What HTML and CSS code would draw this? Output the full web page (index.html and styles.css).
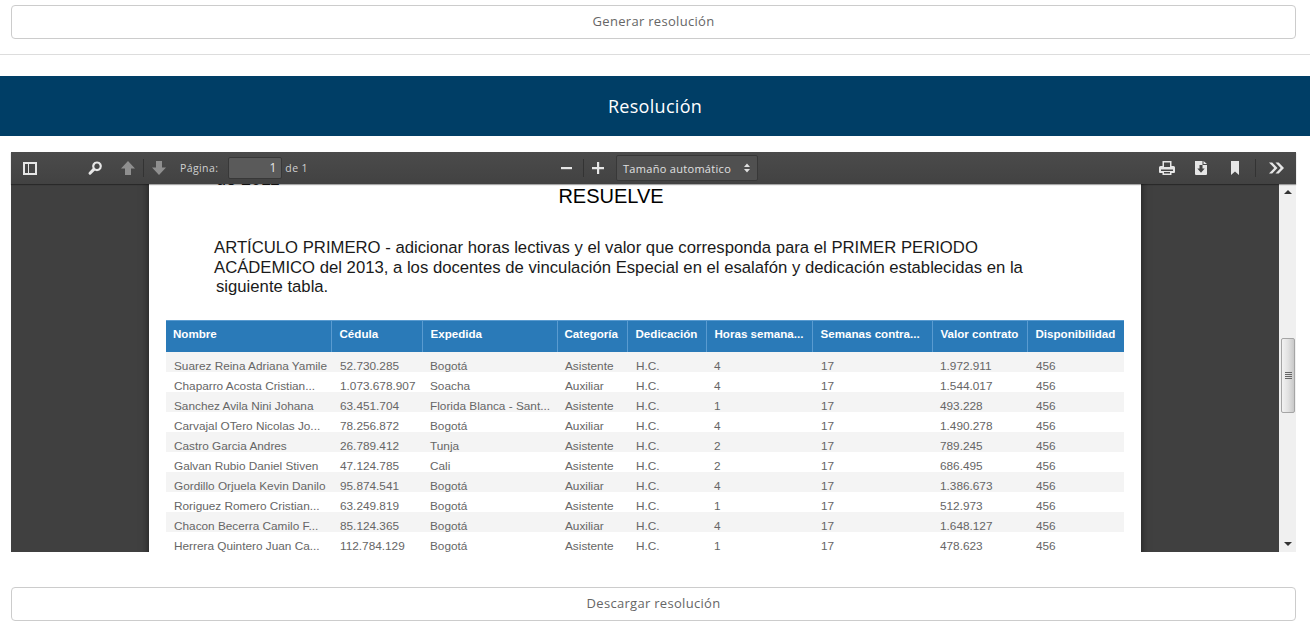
FILE: index.html
```html
<!DOCTYPE html>
<html>

<head>
    <meta charset="UTF-8">
    <title>Resolución</title>
    <link rel="stylesheet" href="styles.css">
</head>

<body>
    <div class="actionRow">
        <button class="actionButton">Generar resolución</button>
    </div>
    <hr class="divider">
    <h2 class="banner">Resolución</h2>

    <div class="viewer">
        <div class="viewerToolbar">
            <div class="toolbarLeft">
                <button class="toolButton sidebarToggle"><svg class="toolIcon"><use href="#icon-sidebar" /></svg></button>
                <button class="toolButton searchToggle"><svg class="toolIcon"><use href="#icon-search" /></svg></button>
                <button class="toolButton dimmed"><svg class="toolIcon"><use href="#icon-up" /></svg></button>
                <span class="toolSeparator"></span>
                <button class="toolButton dimmed"><svg class="toolIcon"><use href="#icon-down" /></svg></button>
                <span class="toolLabel pageLabel">Página:</span>
                <span class="pageInput">1</span>
                <span class="toolLabel">de 1</span>
            </div>
            <div class="toolbarCenter">
                <button class="toolButton"><svg class="toolIcon"><use href="#icon-minus" /></svg></button>
                <span class="toolSeparator zoomSeparator"></span>
                <button class="toolButton"><svg class="toolIcon"><use href="#icon-plus" /></svg></button>
                <span class="scaleSelect">Tamaño automático<svg class="selectArrows"><use href="#icon-updown" /></svg></span>
            </div>
            <div class="toolbarRight">
                <button class="toolButton wide"><svg class="toolIcon"><use href="#icon-print" /></svg></button>
                <button class="toolButton wide"><svg class="toolIcon"><use href="#icon-download" /></svg></button>
                <button class="toolButton wide"><svg class="toolIcon"><use href="#icon-bookmark" /></svg></button>
                <span class="toolSeparator moreSeparator"></span>
                <button class="toolButton"><svg class="toolIcon"><use href="#icon-more" /></svg></button>
            </div>
        </div>

        <div class="viewerBody">
            <div class="pageArea">
                <div class="sheet">
                    <p class="clippedLine">de 2011</p>
                    <p class="resolveTitle">RESUELVE</p>
                    <p class="article">ARTÍCULO PRIMERO - adicionar horas lectivas y el valor que corresponda para el PRIMER PERIODO<br>ACÁDEMICO del 2013, a los docentes de vinculación Especial en el esalafón y dedicación establecidas en la<br><span class="lastLine">siguiente tabla.</span></p>
                    <table class="teachers">
                        <colgroup>
                            <col class="colName"><col class="colId"><col class="colCity"><col class="colCat"><col class="colDed"><col class="colHours"><col class="colWeeks"><col class="colValue"><col class="colAvail">
                        </colgroup>
                        <thead>
                            <tr><th>Nombre</th><th>Cédula</th><th>Expedida</th><th>Categoría</th><th>Dedicación</th><th>Horas semana...</th><th>Semanas contra...</th><th>Valor contrato</th><th>Disponibilidad</th></tr>
                        </thead>
                        <tbody>
                            <tr><td>Suarez Reina Adriana Yamile</td><td>52.730.285</td><td>Bogotá</td><td>Asistente</td><td>H.C.</td><td>4</td><td>17</td><td>1.972.911</td><td>456</td></tr>
                            <tr><td>Chaparro Acosta Cristian...</td><td>1.073.678.907</td><td>Soacha</td><td>Auxiliar</td><td>H.C.</td><td>4</td><td>17</td><td>1.544.017</td><td>456</td></tr>
                            <tr><td>Sanchez Avila Nini Johana</td><td>63.451.704</td><td>Florida Blanca - Sant...</td><td>Asistente</td><td>H.C.</td><td>1</td><td>17</td><td>493.228</td><td>456</td></tr>
                            <tr><td>Carvajal OTero Nicolas Jo...</td><td>78.256.872</td><td>Bogotá</td><td>Auxiliar</td><td>H.C.</td><td>4</td><td>17</td><td>1.490.278</td><td>456</td></tr>
                            <tr><td>Castro Garcia Andres</td><td>26.789.412</td><td>Tunja</td><td>Asistente</td><td>H.C.</td><td>2</td><td>17</td><td>789.245</td><td>456</td></tr>
                            <tr><td>Galvan Rubio Daniel Stiven</td><td>47.124.785</td><td>Cali</td><td>Asistente</td><td>H.C.</td><td>2</td><td>17</td><td>686.495</td><td>456</td></tr>
                            <tr><td>Gordillo Orjuela Kevin Danilo</td><td>95.874.541</td><td>Bogotá</td><td>Auxiliar</td><td>H.C.</td><td>4</td><td>17</td><td>1.386.673</td><td>456</td></tr>
                            <tr><td>Roriguez Romero Cristian...</td><td>63.249.819</td><td>Bogotá</td><td>Asistente</td><td>H.C.</td><td>1</td><td>17</td><td>512.973</td><td>456</td></tr>
                            <tr><td>Chacon Becerra Camilo F...</td><td>85.124.365</td><td>Bogotá</td><td>Auxiliar</td><td>H.C.</td><td>4</td><td>17</td><td>1.648.127</td><td>456</td></tr>
                            <tr><td>Herrera Quintero Juan Ca...</td><td>112.784.129</td><td>Bogotá</td><td>Asistente</td><td>H.C.</td><td>1</td><td>17</td><td>478.623</td><td>456</td></tr>
                        </tbody>
                    </table>
                </div>
            </div>
            <div class="scrollTrack">
                <span class="scrollArrow arrowUp"></span>
                <div class="scrollSpace">
                    <div class="scrollThumb"><span class="thumbGrip"></span></div>
                </div>
                <span class="scrollArrow arrowDown"></span>
            </div>
        </div>
    </div>

    <div class="actionRow bottomRow">
        <button class="actionButton">Descargar resolución</button>
    </div>

    <svg xmlns="http://www.w3.org/2000/svg" class="iconSheet">
        <symbol id="icon-sidebar" viewBox="0 0 16 16">
            <path fill="currentColor" fill-rule="evenodd" d="M1 2h14v13H1zM3 4v9h3V4zM7 4v9h6V4z" />
        </symbol>
        <symbol id="icon-search" viewBox="0 0 16 16">
            <path fill="none" stroke="currentColor" stroke-width="2.2" d="M10 2.500a3.800 3.800 0 1 1-.01 0z" />
            <path fill="none" stroke="currentColor" stroke-width="3" stroke-linecap="round" d="M6.800 9.400 3 13.200" />
        </symbol>
        <symbol id="icon-up" viewBox="0 0 16 16">
            <path fill="currentColor" d="M8 1 15 8.500H11V15H5V8.500H1z" />
        </symbol>
        <symbol id="icon-down" viewBox="0 0 16 16">
            <path fill="currentColor" d="M5 1h6v6.500h4L8 15 1 7.500h4z" />
        </symbol>
        <symbol id="icon-minus" viewBox="0 0 16 16">
            <path fill="currentColor" d="M2 7h11v2.200H2z" />
        </symbol>
        <symbol id="icon-plus" viewBox="0 0 16 16">
            <path fill="currentColor" d="M7 2h2.200v5H14v2.200H9.200V14H7V9.200H2V7h5z" />
        </symbol>
        <symbol id="icon-updown" viewBox="0 0 8 12">
            <path fill="currentColor" d="M4 1.500 7 5H1zM1 7h6l-3 3.500z" />
        </symbol>
        <symbol id="icon-print" viewBox="0 0 16 16">
            <path fill="currentColor" fill-rule="evenodd" d="M3.500 1h9v5H14.500A1.500 1.500 0 0 1 16 7.500V12a1 1 0 0 1-1 1h-2.500v2h-9v-2H1a1 1 0 0 1-1-1V7.500A1.500 1.500 0 0 1 1.500 6h2zM5 2.500V7h6V2.500zM2 9.500V11h12V9.500zM5 12v1.500h6V12z" />
        </symbol>
        <symbol id="icon-download" viewBox="0 0 16 16">
            <path fill="currentColor" fill-rule="evenodd" d="M2 1h7.500v4H14v9a1 1 0 0 1-1 1H3a1 1 0 0 1-1-1zM6.500 5v3.500H4.300L8 12.800l3.700-4.300H9.500V5zM10.500 1 14 4H10.500z" />
        </symbol>
        <symbol id="icon-bookmark" viewBox="0 0 16 16">
            <path fill="currentColor" d="M4 1h8v14L8 11.500 4 15z" />
        </symbol>
        <symbol id="icon-more" viewBox="0 0 16 16">
            <path fill="currentColor" d="M1 2.500h3.200L9.500 8l-5.300 5.500H1L6.200 8zM7.500 2.500h3.200L16 8l-5.300 5.500H7.500L12.700 8z" />
        </symbol>
    </svg>
</body>

</html>
```
FILE: styles.css
```css
html,
body {
    margin: 0;
    height: 100%;
    background: #fff;
    overflow: hidden;
    font-family: 'Open Sans', sans-serif;
}

.iconSheet {
    display: none;
}

.actionRow {
    padding: 5px 14px 0 11px;
}

.bottomRow {
    padding-top: 35px;
}

.actionButton {
    display: block;
    width: 100%;
    height: 34px;
    padding: 0 0 2px;
    border: 1px solid #ccc;
    border-radius: 4px;
    background: #fff;
    color: #666;
    font-family: 'Open Sans', sans-serif;
    font-size: 13px;
    letter-spacing: .3px;
}

.divider {
    height: 1px;
    margin: 15px 0 21px;
    border: 0;
    background: #ddd;
}

.banner {
    margin: 0;
    height: 60px;
    line-height: 60px;
    background: #003e66;
    color: #fff;
    font-size: 18px;
    font-weight: 400;
    text-align: center;
    letter-spacing: .3px;
}

.viewer {
    display: flex;
    flex-direction: column;
    height: 400px;
    margin: 16px 14px 0 11px;
    background: #404040;
}

.viewerToolbar {
    position: relative;
    z-index: 2;
    display: flex;
    flex: none;
    justify-content: space-between;
    align-items: center;
    height: 32px;
    background: linear-gradient(#4b4b4b, #424242);
    box-shadow: 0 1px 1px rgba(0, 0, 0, .35);
    color: #d9d9d9;
}

.toolbarLeft,
.toolbarCenter,
.toolbarRight {
    display: flex;
    align-items: center;
}

.toolbarCenter {
    position: absolute;
    left: 540px;
    top: 0;
    height: 32px;
}

.toolbarRight {
    margin-left: auto;
    padding-right: 4px;
}

.toolButton {
    display: flex;
    justify-content: center;
    align-items: center;
    width: 32px;
    height: 32px;
    padding: 0;
    border: none;
    background: transparent;
    color: #e6e6e6;
}

.toolButton.wide {
    width: 34px;
}

.toolButton.dimmed {
    width: 30px;
    color: #8f8f8f;
}

.sidebarToggle {
    margin-left: 3px;
}

.searchToggle {
    margin-left: 33px;
    margin-right: 2px;
}

.toolIcon {
    width: 16px;
    height: 16px;
}

.toolSeparator {
    width: 1px;
    height: 18px;
    background: #333;
}

.zoomSeparator {
    margin-right: -2px;
}

.moreSeparator {
    margin: 0 4px 0 3px;
}

.toolLabel {
    font-size: 10.500px;
    letter-spacing: .4px;
    color: #d0d0d0;
}

.pageLabel {
    margin-left: 6px;
}

.pageInput {
    box-sizing: border-box;
    width: 54px;
    height: 22px;
    margin: 0 3px 0 10px;
    padding-right: 5px;
    border: 1px solid #383838;
    border-radius: 2px;
    background: #5a5a5a;
    color: #e6e6e6;
    font-size: 12px;
    line-height: 20px;
    text-align: right;
}

.scaleSelect {
    display: flex;
    justify-content: space-between;
    align-items: center;
    box-sizing: border-box;
    width: 142px;
    height: 26px;
    margin-left: 2px;
    padding: 0 6px;
    border: 1px solid #383838;
    border-radius: 2px;
    background: #505050;
    color: #e0e0e0;
    font-size: 11px;
    letter-spacing: .3px;
}

.selectArrows {
    width: 8px;
    height: 12px;
}

.viewerBody {
    display: flex;
    flex: 1;
    min-height: 0;
}

.pageArea {
    flex: 1;
    min-width: 0;
    overflow: hidden;
    background: #404040;
}

.sheet {
    box-sizing: border-box;
    width: 992px;
    height: 420px;
    margin-left: 138px;
    padding: 0 17px;
    background: #fff;
    box-shadow: 0 0 8px rgba(0, 0, 0, .55);
    color: #1a1a1a;
    font-family: 'Liberation Sans', Arial, sans-serif;
}

.clippedLine {
    margin: -14px 0 0 50px;
    font-size: 18px;
    line-height: 18px;
}

.resolveTitle {
    margin: -3px 0 0;
    padding-right: 68px;
    color: #000;
    font-size: 20px;
    line-height: 22px;
    text-align: center;
}

.article {
    margin: 31px 0 0 48px;
    font-size: 16.700px;
    line-height: 19.500px;
}

.lastLine {
    margin-left: 2px;
}

.teachers {
    width: 958px;
    margin-top: 23px;
    border-collapse: collapse;
    table-layout: fixed;
    font-size: 11.800px;
}

.colName { width: 165px; }
.colId { width: 91px; }
.colCity { width: 135px; }
.colCat { width: 70px; }
.colDed { width: 79px; }
.colHours { width: 106px; }
.colWeeks { width: 120px; }
.colValue { width: 95px; }
.colAvail { width: 97px; }

.teachers th {
    height: 32px;
    padding: 0 0 6px 8px;
    box-sizing: border-box;
    border-top: 1px solid #5a9bd0;
    border-left: 1px solid #5a9bd0;
    background: #2a7ab8;
    color: #fff;
    font-size: 11.600px;
    font-weight: 700;
    text-align: left;
    white-space: nowrap;
}

.teachers th:first-child {
    padding-left: 7px;
    border-left: 0;
}

.teachers th:nth-child(4) {
    padding-left: 7px;
}

.teachers td {
    height: 20px;
    padding: 9px 0 0 8px;
    box-sizing: border-box;
    color: #666;
    line-height: 11px;
    white-space: nowrap;
}

.teachers td:nth-child(2),
.teachers td:nth-child(5),
.teachers td:nth-child(7),
.teachers td:nth-child(9) {
    padding-left: 9px;
}

.teachers tbody tr:nth-child(odd) {
    background: #f4f4f4;
}

.scrollTrack {
    display: flex;
    flex: none;
    flex-direction: column;
    align-items: center;
    width: 17px;
    background: #f0f0f0;
}

.scrollArrow {
    flex: none;
    width: 0;
    height: 0;
    margin: 6px 0;
    border-left: 4px solid transparent;
    border-right: 4px solid transparent;
}

.arrowUp {
    border-bottom: 4px solid #333;
}

.arrowDown {
    border-top: 4px solid #333;
}

.scrollSpace {
    flex: 1;
    box-sizing: border-box;
    width: 100%;
    padding: 138px 1px 0 2px;
}

.scrollThumb {
    display: flex;
    justify-content: center;
    align-items: center;
    box-sizing: border-box;
    height: 75px;
    border: 1px solid #a5a5a5;
    border-radius: 2px;
    background: linear-gradient(90deg, #f2f2f2, #e2e2e2 50%, #c8c8c8);
}

.thumbGrip {
    width: 7px;
    height: 7px;
    background: repeating-linear-gradient(#666 0 1px, transparent 1px 2px);
}
```
